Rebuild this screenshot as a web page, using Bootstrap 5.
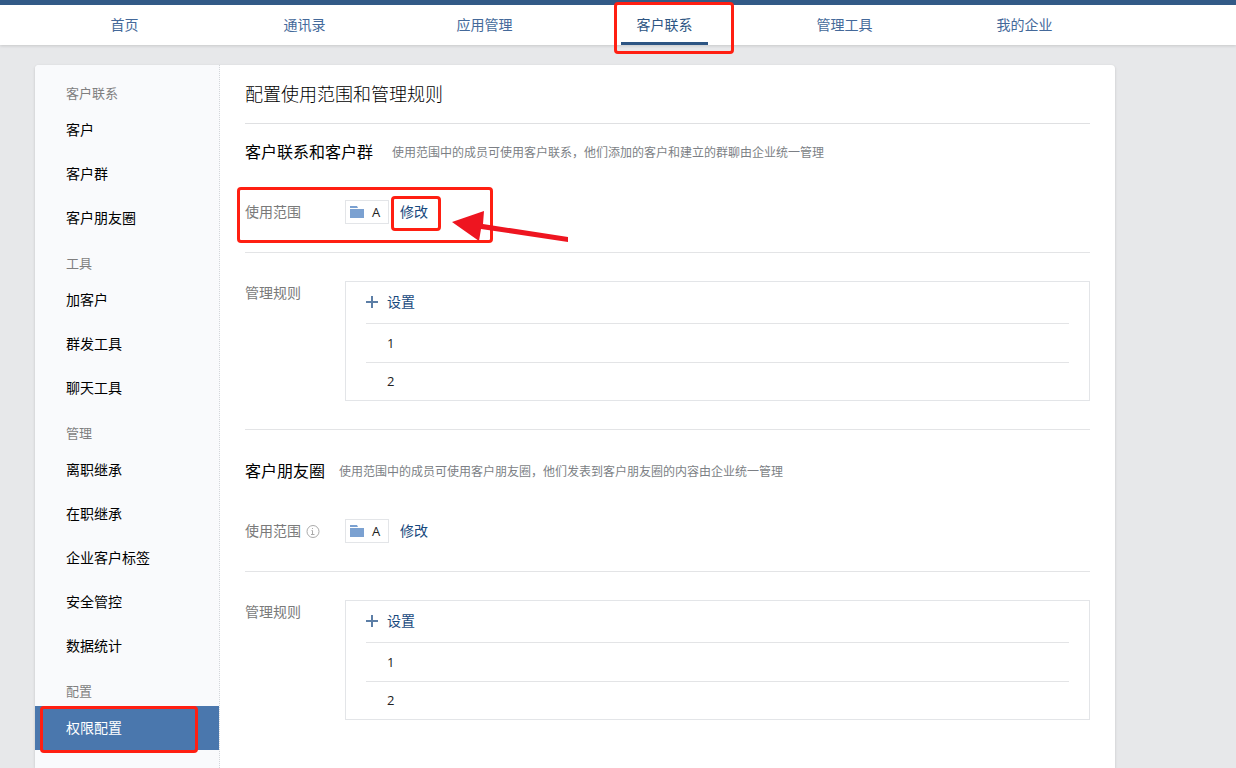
<!DOCTYPE html>
<html lang="zh-CN">
<head>
<meta charset="utf-8">
<meta name="viewport" content="width=device-width, initial-scale=1">
<title>配置使用范围和管理规则</title>
<link rel="stylesheet" href="https://cdn.jsdelivr.net/npm/bootstrap@5.3.0/dist/css/bootstrap.min.css">
<style>
body { font-family: "Open Sans", "Noto Sans CJK SC", sans-serif; font-size: 14px; line-height: 20px; font-weight: 400; color: #000; background: #e7e8ea; }
a { text-decoration: none; color: #17497d; }
.topbar { background: #fff; border-top: 5px solid #325a87; box-shadow: 0 1px 3px rgba(0,0,0,.14); }
.frame { width: calc(100% - 35px); max-width: 1080px; margin-left: 35px; }
.topbar .nav-link { position: relative; height: 40px; padding: 10px 1px 10px 0; color: #44699a; }
.topbar .nav-link.active { color: #2d5583; }
.topbar .nav-link.active span::after { content: ""; position: absolute; left: 50%; bottom: 0; width: 87px; height: 3px; margin-left: -44px; background: #2d5583; }
.panel { margin-top: 20px; background: #fff; border-radius: 4px 4px 0 0; box-shadow: 0 1px 3px rgba(0,0,0,.16); }
.side { width: 185px; padding-top: 5px; background: #f9fafc; border-right: 1px dotted #d3d6da; border-radius: 4px 0 0 0; }
.side h2 { margin: 0; padding: 13px 31px 5px; font-size: 13px; line-height: 20px; font-weight: 400; color: #7f7f7f; }
.side .nav-link { position: relative; padding: 12px 31px; color: #000; }
.side .nav-link.active { background: #4a77ad; color: #fff; }
.content { padding: 0 25px; min-width: 0; }
.content h1 { margin: 0; padding: 17px 0; font-size: 18px; line-height: 24px; font-weight: 300; border-bottom: 1px solid #dfe0e2; }
.block { padding: 16px 0 28px; }
.block + .block { padding-top: 29px; border-top: 1px solid #e3e4e6; }
.block h2 { margin: 0; font-size: 16px; line-height: 24px; font-weight: 400; }
.block-note { padding-top: 2px; font-size: 12px; color: #7c7f85; margin-left: 14px; }
.wide-gap { margin-left: 19px; }
.scope { position: relative; margin-top: 36px; padding-bottom: 28px; border-bottom: 1px solid #e3e4e6; }
.field-name { flex: 0 0 100px; color: #7a7a7a; }
.dept { width: 44px; height: 24px; padding: 0 4px; border: 1px solid #e3e5e8; font-size: 13px; gap: 8px; }
.dept, .digit { color: #222; }
.edit { position: relative; margin-left: 11px; }
.rules { padding-top: 28px; }
.rules .field-name { padding-top: 2px; }
.rule-box { padding: 0 20px; border: 1px solid #e3e5e8; }
.rule-box .add { height: 42px; padding-bottom: 2px; border-bottom: 1px solid #e3e4e6; }
.rule-box .add a { gap: 9px; }
.rule-box li { padding: 9px 21px; line-height: 20px; font-size: 13px; }
.rule-box li + li { padding: 8px 21px 9px; border-top: 1px solid #e3e4e6; }
/* Red tutorial marks laid over the page */
.callout { position: absolute; border: 3px solid #ff1f12; border-radius: 4px; pointer-events: none; z-index: 2; }
.callout-nav { left: 39px; top: -3px; width: 120px; height: 52px; }
.callout-scope { left: -8px; top: -13px; width: 256px; height: 56px; }
.callout-edit { left: -9px; top: -6px; width: 50px; height: 35px; }
.callout-side { left: 5px; top: 0; width: 158px; height: 47px; }
.pointer { position: absolute; left: 206px; top: 8px; z-index: 3; }
</style>
</head>
<body>
<div class="d-flex flex-column min-vh-100">
  <header class="topbar">
    <nav class="frame nav nav-fill flex-nowrap" aria-label="主导航">
      <a class="nav-link col-2" href="#">首页</a>
      <a class="nav-link col-2" href="#">通讯录</a>
      <a class="nav-link col-2" href="#">应用管理</a>
      <a class="nav-link col-2 active" href="#"><span>客户联系</span><i class="callout callout-nav"></i></a>
      <a class="nav-link col-2" href="#">管理工具</a>
      <a class="nav-link col-2" href="#">我的企业</a>
    </nav>
  </header>
  <div class="frame panel d-flex flex-grow-1">
    <aside class="side flex-shrink-0">
      <nav class="nav flex-column">
        <h2>客户联系</h2>
        <a class="nav-link" href="#">客户</a>
        <a class="nav-link" href="#">客户群</a>
        <a class="nav-link" href="#">客户朋友圈</a>
        <h2>工具</h2>
        <a class="nav-link" href="#">加客户</a>
        <a class="nav-link" href="#">群发工具</a>
        <a class="nav-link" href="#">聊天工具</a>
        <h2>管理</h2>
        <a class="nav-link" href="#">离职继承</a>
        <a class="nav-link" href="#">在职继承</a>
        <a class="nav-link" href="#">企业客户标签</a>
        <a class="nav-link" href="#">安全管控</a>
        <a class="nav-link" href="#">数据统计</a>
        <h2>配置</h2>
        <a class="nav-link active" href="#">权限配置<i class="callout callout-side"></i></a>
      </nav>
    </aside>
    <main class="content flex-grow-1">
      <h1>配置使用范围和管理规则</h1>
      <section class="block">
        <div class="d-flex align-items-center">
          <h2>客户联系和客户群</h2>
          <span class="block-note wide-gap">使用范围中的成员可使用客户联系，他们添加的客户和建立的群聊由企业统一管理</span>
        </div>
        <div class="scope d-flex align-items-center">
          <span class="field-name">使用范围</span>
          <span class="dept d-flex align-items-center">
            <svg width="14" height="12" aria-hidden="true"><path d="M0 0h7l1 2H0zM0 3h14v9H0z" fill="#7ba1d1"/></svg>A
          </span>
          <a class="edit" href="#">修改<i class="callout callout-edit"></i></a>
          <i class="callout callout-scope"></i>
          <svg class="pointer" width="120" height="36" aria-hidden="true"><path d="M1 14 33 3l-1 13 85 13v5L30 21l-2 12z" fill="#ee1520"/></svg>
        </div>
        <div class="rules d-flex">
          <span class="field-name">管理规则</span>
          <div class="rule-box flex-grow-1">
            <div class="add d-flex align-items-center"><a class="d-flex align-items-center" href="#"><svg width="12" height="12" aria-hidden="true"><path d="M0 5h12v2H0zM5 0h2v12H5z" fill="#5c7ea6"/></svg>设置</a></div>
            <ul class="list-unstyled mb-0"><li class="digit">1</li><li class="digit">2</li></ul>
          </div>
        </div>
      </section>
      <section class="block">
        <div class="d-flex align-items-center">
          <h2>客户朋友圈</h2>
          <span class="block-note">使用范围中的成员可使用客户朋友圈，他们发表到客户朋友圈的内容由企业统一管理</span>
        </div>
        <div class="scope d-flex align-items-center">
          <span class="field-name d-flex align-items-center">使用范围
            <svg class="ms-1" width="15" height="15" fill="none" stroke="#aaa" aria-hidden="true"><circle cx="8" cy="7.5" r="6"/><path d="M7.500 4v1M6.500 6.500h1v4M6 10.500h3.500"/></svg></span>
          <span class="dept d-flex align-items-center">
            <svg width="14" height="12" aria-hidden="true"><path d="M0 0h7l1 2H0zM0 3h14v9H0z" fill="#7ba1d1"/></svg>A
          </span>
          <a class="edit" href="#">修改</a>
        </div>
        <div class="rules d-flex">
          <span class="field-name">管理规则</span>
          <div class="rule-box flex-grow-1">
            <div class="add d-flex align-items-center"><a class="d-flex align-items-center" href="#"><svg width="12" height="12" aria-hidden="true"><path d="M0 5h12v2H0zM5 0h2v12H5z" fill="#5c7ea6"/></svg>设置</a></div>
            <ul class="list-unstyled mb-0"><li class="digit">1</li><li class="digit">2</li></ul>
          </div>
        </div>
      </section>
    </main>
  </div>
</div>
<script src="https://cdn.jsdelivr.net/npm/bootstrap@5.3.0/dist/js/bootstrap.bundle.min.js"></script>
</body>
</html>
